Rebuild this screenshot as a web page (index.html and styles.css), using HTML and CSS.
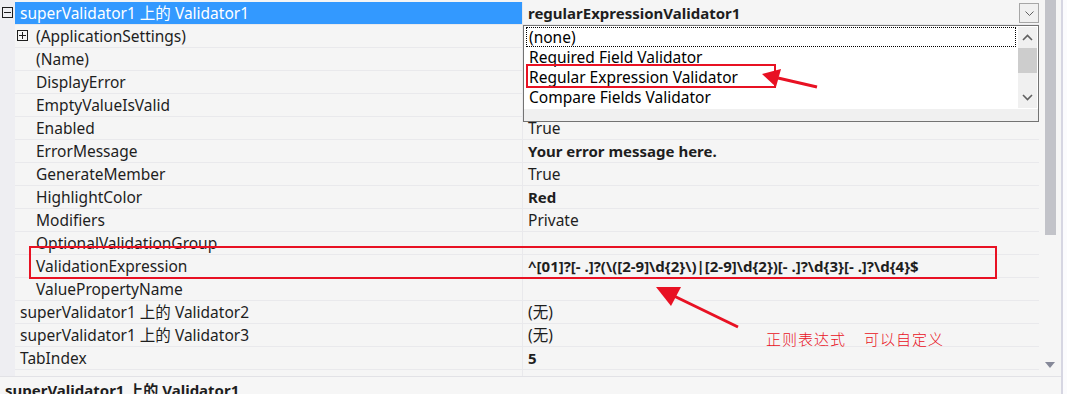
FILE: index.html
```html
<!DOCTYPE html>
<html lang="zh-CN">

<head>
    <meta charset="UTF-8">
    <title>属性</title>
    <link rel="stylesheet" href="styles.css">
</head>

<body>
    <div class="pane">
        <div class="left">
            <div class="main">
                <div class="grid">
                    <div class="row cat selected">
                        <div class="g"><span class="box minus"></span></div>
                        <div class="n">superValidator1 上的 Validator1</div>
                        <div class="v"><b>regularExpressionValidator1</b><span class="dd-btn"><svg width="9" height="5" viewBox="0 0 9 5"><polyline points="0.5,0.5 4.5,4.5 8.5,0.5" fill="none" stroke="#606060" stroke-width="1"/></svg></span></div>
                    </div>
                    <div class="row">
                        <div class="g"></div>
                        <div class="n"><span class="box plus"></span>(ApplicationSettings)</div>
                        <div class="v"></div>
                    </div>
                    <div class="row"><div class="g"></div><div class="n">(Name)</div><div class="v"></div></div>
                    <div class="row"><div class="g"></div><div class="n">DisplayError</div><div class="v"></div></div>
                    <div class="row"><div class="g"></div><div class="n">EmptyValueIsValid</div><div class="v"></div></div>
                    <div class="row"><div class="g"></div><div class="n">Enabled</div><div class="v">True</div></div>
                    <div class="row"><div class="g"></div><div class="n">ErrorMessage</div><div class="v"><b>Your error message here.</b></div></div>
                    <div class="row"><div class="g"></div><div class="n">GenerateMember</div><div class="v">True</div></div>
                    <div class="row"><div class="g"></div><div class="n">HighlightColor</div><div class="v"><b>Red</b></div></div>
                    <div class="row"><div class="g"></div><div class="n">Modifiers</div><div class="v">Private</div></div>
                    <div class="row"><div class="g"></div><div class="n">OptionalValidationGroup</div><div class="v"></div></div>
                    <div class="row"><div class="g"></div><div class="n">ValidationExpression</div><div class="v"><b>^[01]?[- .]?(\([2-9]\d{2}\)|[2-9]\d{2})[- .]?\d{3}[- .]?\d{4}$</b></div></div>
                    <div class="row"><div class="g"></div><div class="n">ValuePropertyName</div><div class="v"></div></div>
                    <div class="row cat"><div class="g"></div><div class="n">superValidator1 上的 Validator2</div><div class="v">(无)</div></div>
                    <div class="row cat"><div class="g"></div><div class="n">superValidator1 上的 Validator3</div><div class="v">(无)</div></div>
                    <div class="row cat"><div class="g"></div><div class="n">TabIndex</div><div class="v"><b>5</b></div></div>
                    <div class="row cat"><div class="g"></div><div class="n"></div><div class="v"></div></div>
                </div>
                <div class="vscroll">
                    <div class="thumb"></div>
                    <div class="down"></div>
                </div>
                <div class="gap"></div>
            </div>
            <div class="desc">superValidator1 上的 Validator1</div>
        </div>
        <div class="edge"></div>

        <!-- 下拉列表 -->
        <div class="dropdown">
            <div class="list">
                <div class="items">
                    <div class="item focus">(none)</div>
                    <div class="item">Required Field Validator</div>
                    <div class="item">Regular Expression Validator</div>
                    <div class="item">Compare Fields Validator</div>
                </div>
                <div class="lscroll">
                    <div class="arrow up"><svg width="11" height="7" viewBox="0 0 11 7"><polyline points="1,6 5.5,1.5 10,6" fill="none" stroke="#606060" stroke-width="1.6"/></svg></div>
                    <div class="lthumb"></div>
                    <div class="arrow dn"><svg width="11" height="7" viewBox="0 0 11 7"><polyline points="1,1 5.5,5.5 10,1" fill="none" stroke="#606060" stroke-width="1.6"/></svg></div>
                </div>
            </div>
            <div class="grip"></div>
        </div>

        <!-- 标注 -->
        <svg class="marks" width="1067" height="394" viewBox="0 0 1067 394">
            <rect x="527" y="65" width="248" height="22" fill="none" stroke="#e81123" stroke-width="2"/>
            <line x1="817" y1="87" x2="778" y2="78" stroke="#e81123" stroke-width="3"/>
            <polygon points="762,74 781,69 776,87" fill="#e81123"/>
            <rect x="30" y="247" width="966" height="31" fill="none" stroke="#e81123" stroke-width="2"/>
            <line x1="738" y1="327" x2="674" y2="296" stroke="#e81123" stroke-width="3"/>
            <polygon points="656,287 681,287 671,306" fill="#e81123"/>
        </svg>
        <div class="note"><span>正则表达式</span><span>可以自定义</span></div>
    </div>
</body>

</html>
```

FILE: styles.css
```css
* {
    margin: 0;
    padding: 0;
    box-sizing: border-box;
}

body {
    width: 1067px;
    height: 394px;
    overflow: hidden;
    font-family: "Noto Sans", "Noto Sans CJK SC", sans-serif;
    font-size: 15.5px;
    color: #1e1e1e;
    background-color: #f5f5f5;
}

b {
    font-size: 15px;
}

.pane {
    position: relative;
    display: flex;
    height: 394px;
}

.left {
    display: flex;
    flex-direction: column;
    width: 1061px;
}

.main {
    display: flex;
    height: 376px;
}

.grid {
    width: 1045px;
    padding-top: 2px;
    overflow: hidden;
    background: linear-gradient(to right, #eeeef2 15px, #f5f5f5 15px);
}

.row {
    display: flex;
    height: 23px;
    line-height: 22px;
    white-space: nowrap;
}

.row .g {
    position: relative;
    width: 15px;
}

.row .n {
    display: flex;
    align-items: center;
    width: 508px;
    padding-left: 21px;
    border-bottom: 1px solid #e9e9ec;
    border-right: 1px solid #e9e9ec;
}

.row.cat .n {
    padding-left: 5px;
}

.row .v {
    display: flex;
    align-items: center;
    width: 516px;
    padding-left: 5px;
    border-bottom: 1px solid #e9e9ec;
}

.row.selected .n {
    background-color: #3399ff;
    color: #fff;
}

.box {
    position: absolute;
    width: 11px;
    height: 11px;
    border: 1px solid #1e1e1e;
}

.box::before,
.box::after {
    content: "";
    position: absolute;
    background-color: #1e1e1e;
}

.box::before {
    left: 1px;
    top: 4px;
    width: 7px;
    height: 1px;
}

.plus::after {
    left: 4px;
    top: 1px;
    width: 1px;
    height: 7px;
}

.minus {
    left: 2px;
    top: 5px;
}

.plus {
    left: 17px;
    top: 30px;
}

.dd-btn {
    display: flex;
    align-items: center;
    justify-content: center;
    width: 20px;
    height: 20px;
    margin-left: auto;
    border: 1px solid #a6a6a6;
    background-color: #f0f0f0;
}

.vscroll {
    display: flex;
    flex-direction: column;
    width: 11px;
}

.thumb {
    height: 235px;
    background-color: #c2c3c9;
}

.down {
    width: 0;
    height: 0;
    margin: auto 0 8px 0;
    border-left: 5.5px solid transparent;
    border-right: 5.5px solid transparent;
    border-top: 6px solid #868999;
}

.gap {
    width: 5px;
}

.desc {
    flex: 1;
    padding: 2px 0 0 5px;
    border-top: 1px solid #e2e2e6;
    font-size: 15px;
    font-weight: 700;
    line-height: 22px;
    white-space: nowrap;
    background-color: #f6f6f6;
}

.edge {
    width: 6px;
    border-left: 2px solid #d6d6e2;
    background-color: #fbfbfd;
}

/* 下拉列表 */
.dropdown {
    position: absolute;
    left: 523px;
    top: 25px;
    width: 516px;
    height: 97px;
    border: 1px solid #737373;
    background-color: #f0f0f0;
}

.list {
    display: flex;
    height: 83px;
    padding: 1px 1px 1px 2px;
    background-color: #fff;
}

.items {
    flex: 1;
    color: #000;
}

.item {
    height: 20px;
    line-height: 19px;
    padding-left: 2px;
    border: 1px solid transparent;
    white-space: nowrap;
}

.item.focus {
    border: 1px dotted #000;
}

.lscroll {
    display: flex;
    flex-direction: column;
    width: 19px;
    margin-left: 2px;
    background-color: #f0f0f0;
}

.arrow {
    display: flex;
    align-items: center;
    justify-content: center;
    height: 21px;
}

.lthumb {
    height: 25px;
    background-color: #cdcdcd;
}

.arrow.dn {
    margin-top: auto;
}

/* 标注 */
.marks {
    position: absolute;
    left: 0;
    top: 0;
    pointer-events: none;
}

.note {
    position: absolute;
    left: 766px;
    top: 328px;
    display: flex;
    gap: 18px;
    font-family: "Noto Sans CJK SC", sans-serif;
    font-size: 15px;
    font-weight: 300;
    letter-spacing: 1px;
    color: #e81123;
}
```
